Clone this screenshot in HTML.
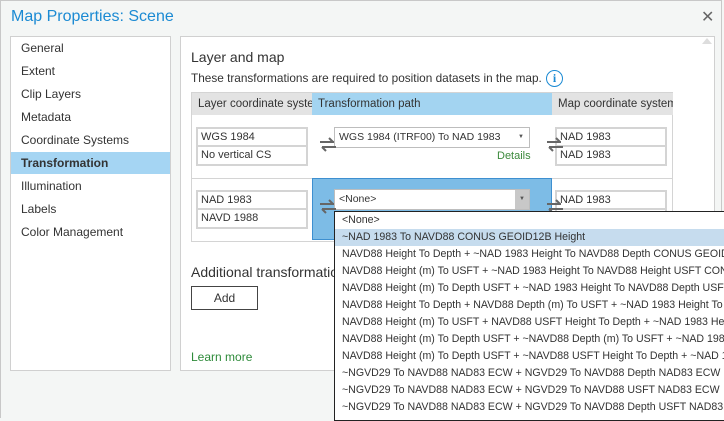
<!DOCTYPE html>
<html><head><meta charset="utf-8"><style>
*{margin:0;padding:0;box-sizing:border-box}
body{width:724px;height:418px;overflow:hidden;background:#f4f6f5;font-family:"Liberation Sans",sans-serif;font-size:12px;color:#333;position:relative}
.a{position:absolute;white-space:nowrap}
.frame{position:absolute;left:0;top:0;width:722px;height:418px;border:1px solid #c8c8c8;border-bottom:none}
.title{left:11px;top:8px;font-size:16px;color:#1b8ad3}
.nav{left:10px;top:36px;width:161px;height:335px;background:#fff;border:1px solid #d0d0d0}
.nav div{position:absolute;left:0;width:159px;height:22px;line-height:22px;padding-left:10px;font-size:12px;color:#333}
.panel{left:180px;top:36px;width:535px;height:335px;background:#fff;border:1px solid #d0d0d0}
.tbl{left:191px;top:92px;width:482px;height:150px;border:1px solid #d4d4d4;background:#fff}
.hd{position:absolute;top:0;height:22px;line-height:22px;background:#e3e3e3;padding-left:6px;overflow:hidden;font-size:11.5px}
.box{position:absolute;width:112px;height:39px;border:2px solid #d4d4d4;background:#fff}
.box div{height:18px;line-height:17px;padding-left:3px;font-size:11px}
.box div:first-child{border-bottom:2px solid #d4d4d4}
.dd{position:absolute;height:21px;border:1px solid #bdbdbd;background:#fff;line-height:19px;padding-left:4px;font-size:10.5px}
.list{left:334px;top:211px;width:392px;height:210px;border:1px solid #222;background:#fff;overflow:hidden}
.list div{height:17px;line-height:17px;padding-left:7px;font-size:10.6px;white-space:nowrap;color:#333}
</style></head><body>
<div class="frame"></div>
<div class="a title">Map Properties: Scene</div>
<div class="a" style="left:701px;top:7px;font-size:16px;color:#666">✕</div>
<div class="a nav">
<div style="top:0">General</div>
<div style="top:23px">Extent</div>
<div style="top:46px">Clip Layers</div>
<div style="top:69px">Metadata</div>
<div style="top:92px">Coordinate Systems</div>
<div style="top:115px;background:#a5d5f3;font-weight:bold;color:#333">Transformation</div>
<div style="top:138px">Illumination</div>
<div style="top:161px">Labels</div>
<div style="top:184px">Color Management</div>
</div>
<div class="a panel"></div>
<div class="a" style="left:702px;top:38px;width:0;height:0;border-left:5px solid transparent;border-right:5px solid transparent;border-bottom:6px solid #ddd"></div>
<div class="a" style="left:191px;top:49px;font-size:14px;color:#333">Layer and map</div>
<div class="a" style="left:191px;top:71px;font-size:11.8px">These transformations are required to position datasets in the map.</div>
<div class="a" style="left:546px;top:70px;width:17px;height:17px;border:1.5px solid #1b8ad3;border-radius:50%;color:#1b8ad3;font-weight:bold;font-size:12px;text-align:center;line-height:14px;font-family:'Liberation Serif',serif">i</div>
<div class="a tbl">
<div class="hd" style="left:0;width:121px">Layer coordinate system</div>
<div class="hd" style="left:120px;width:240px;background:#a3d4f1">Transformation path</div>
<div class="hd" style="left:360px;width:121px">Map coordinate system</div>
<div style="position:absolute;left:0;top:85px;width:480px;height:1px;background:#d4d4d4"></div>
<div style="position:absolute;left:120px;top:85px;width:240px;height:62px;background:#7dbce6;border:1px solid #3d8fd0"></div>
</div>
<div class="box a" style="left:196px;top:127px"><div>WGS 1984</div><div>No vertical CS</div></div>
<div class="box a" style="left:555px;top:127px"><div>NAD 1983</div><div>NAD 1983</div></div>
<div class="box a" style="left:196px;top:190px"><div>NAD 1983</div><div>NAVD 1988</div></div>
<div class="box a" style="left:555px;top:190px"><div>NAD 1983</div><div>NAD 1983</div></div>
<div class="dd a" style="left:334px;top:127px;width:196px">WGS 1984 (ITRF00) To NAD 1983<span style="position:absolute;right:5px;top:0;font-size:6px;color:#555">▼</span></div>
<div class="a" style="left:497px;top:150px;color:#3c8a3c;font-size:11px">Details</div>
<div class="dd a" style="left:334px;top:189px;width:196px">&lt;None&gt;<span style="position:absolute;right:0;top:0;width:14px;height:19px;background:#c8c8c8;font-size:6px;color:#555;text-align:center">▼</span></div>
<svg class="a" style="left:318px;top:135px" width="20" height="18"><path d="M2 7H16M15 7L11 3M4 12H18M4 12L8 16" stroke="#666" stroke-width="2" fill="none"/></svg>
<svg class="a" style="left:545px;top:135px" width="20" height="18"><path d="M2 7H16M15 7L11 3M4 12H18M4 12L8 16" stroke="#666" stroke-width="2" fill="none"/></svg>
<svg class="a" style="left:318px;top:197px" width="20" height="18"><path d="M2 7H16M15 7L11 3M4 12H18M4 12L8 16" stroke="#666" stroke-width="2" fill="none"/></svg>
<svg class="a" style="left:545px;top:197px" width="20" height="18"><path d="M2 7H16M15 7L11 3M4 12H18M4 12L8 16" stroke="#666" stroke-width="2" fill="none"/></svg>
<div class="a" style="left:191px;top:264px;font-size:14px">Additional transformations</div>
<div class="a" style="left:191px;top:286px;width:67px;height:24px;border:1px solid #444;background:#fff;text-align:center;line-height:22px">Add</div>
<div class="a" style="left:191px;top:350px;color:#2e8b3a">Learn more</div>
<div class="a list">
<div>&lt;None&gt;</div>
<div style="background:#c6dcee">~NAD 1983 To NAVD88 CONUS GEOID12B Height</div>
<div>NAVD88 Height To Depth + ~NAD 1983 Height To NAVD88 Depth CONUS GEOID12B</div>
<div>NAVD88 Height (m) To USFT + ~NAD 1983 Height To NAVD88 Height USFT CONUS</div>
<div>NAVD88 Height (m) To Depth USFT + ~NAD 1983 Height To NAVD88 Depth USFT</div>
<div>NAVD88 Height To Depth + NAVD88 Depth (m) To USFT + ~NAD 1983 Height To</div>
<div>NAVD88 Height (m) To USFT + NAVD88 USFT Height To Depth + ~NAD 1983 Height</div>
<div>NAVD88 Height (m) To Depth USFT + ~NAVD88 Depth (m) To USFT + ~NAD 1983</div>
<div>NAVD88 Height (m) To Depth USFT + ~NAVD88 USFT Height To Depth + ~NAD 1983</div>
<div>~NGVD29 To NAVD88 NAD83 ECW + NGVD29 To NAVD88 Depth NAD83 ECW</div>
<div>~NGVD29 To NAVD88 NAD83 ECW + NGVD29 To NAVD88 USFT NAD83 ECW</div>
<div>~NGVD29 To NAVD88 NAD83 ECW + NGVD29 To NAVD88 Depth USFT NAD83 ECW</div>
</div>
</body></html>
